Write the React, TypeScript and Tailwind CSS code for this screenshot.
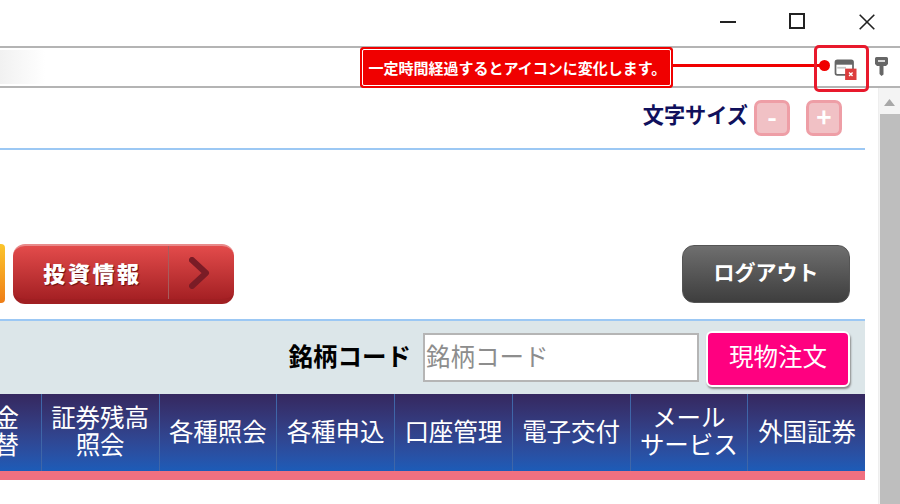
const jp = "font-['Noto_Sans_CJK_JP','Liberation_Sans',sans-serif]";

const navItems = [
  ["入出金", "お振替"],
  ["証券残高", "照会"],
  ["各種照会"],
  ["各種申込"],
  ["口座管理"],
  ["電子交付"],
  ["メール", "サービス"],
  ["外国証券"],
];

function WindowControls() {
  return (
    <div className="flex h-[46px] items-start justify-end bg-white">
      <svg width="16" height="2" className="mt-[21px] mr-[53px]">
        <rect width="16" height="2" fill="#222" />
      </svg>
      <div className="mt-[13px] mr-[54px] h-[16px] w-[16px] border-2 border-[#222]" />
      <svg width="16" height="16" viewBox="0 0 16 16" className="mt-[14px] mr-[25px]">
        <path d="M.7.7 15.3 15.3M15.3.7.7 15.3" stroke="#222" strokeWidth="1.6" fill="none" />
      </svg>
    </div>
  );
}

function TabIcon() {
  return (
    <svg width="24" height="21" viewBox="0 0 26 24">
      <path d="M1 3.5a2 2 0 0 1 2-2h16a2 2 0 0 1 2 2V16a2 2 0 0 1-2 2H3a2 2 0 0 1-2-2Z" fill="none" stroke="#666" strokeWidth="2" />
      <rect x="1" y="1.5" width="20" height="5" fill="#666" />
      <rect x="3" y="9" width="10" height="2" fill="#c8c8c8" />
      <rect x="12" y="11" width="13" height="13" fill="#dc3c3c" />
      <path d="M16.500 15.500l4 4M20.500 15.500l-4 4" stroke="#fff" strokeWidth="1.6" />
    </svg>
  );
}

function KeyIcon() {
  return (
    <svg width="13" height="19" viewBox="0 0 13 19">
      <path d="M1.5 0h10A1.5 1.5 0 0 1 13 1.5V7l-2 2H8.5v8.5L6.5 19 4.500 17V9H2L0 7V1.500A1.500 1.500 0 0 1 1.500 0Z" fill="#666" />
      <rect x="3" y="3" width="7" height="2" fill="#d8d8d8" />
    </svg>
  );
}

function AddressBar() {
  return (
    <div className="relative h-[42px] border-y-2 border-[#b4b4b4] bg-white">
      <div className="mt-[2px] h-[34px] w-[45px] bg-gradient-to-r from-[#f1f1f1] to-white" />
      <div className="absolute left-[360px] top-[-1px] flex h-[41px] w-[313px] items-center rounded-[3px] border border-[#f00000] bg-[#f00000] p-px">
        <div className={`flex h-full w-full items-center justify-center rounded-[2px] border border-white pl-[2px] text-[15px] font-bold leading-none whitespace-nowrap text-white ${jp}`}>
          一定時間経過するとアイコンに変化します。
        </div>
      </div>
      <div className="absolute left-[672px] top-[16px] h-[3px] w-[150px] bg-[#f00000]" />
      <div className="absolute left-[819px] top-[12px] h-[11px] w-[11px] rounded-full bg-[#f00000]" />
      <div className="absolute left-[814px] top-[-3px] flex h-[47px] w-[55px] items-center justify-end rounded-[5px] border-[3px] border-[#e8192c] pr-[8px] pt-[2px]">
        <TabIcon />
      </div>
      <div className="absolute left-[875px] top-[9px]">
        <KeyIcon />
      </div>
    </div>
  );
}

function FontSizeRow() {
  const btn = "flex h-[36px] w-[36px] items-center justify-center rounded-[7px] border-[3px] border-[#ee9ea6] bg-[#f1c1c5] pb-[4px] text-[26px] font-bold leading-none text-white";
  return (
    <div className={`flex h-[62px] items-start justify-end border-b-2 border-[#9cc8f4] pr-[23px] pt-[12px] ${jp}`}>
      <span className="mr-[6px] mt-[-1px] text-[21.200px] font-bold leading-[30px] whitespace-nowrap text-[#10105c]">文字サイズ</span>
      <div className={btn}>-</div>
      <div className={`${btn} ml-[16px]`}>+</div>
    </div>
  );
}

function ButtonRow() {
  return (
    <div className={`flex h-[171px] items-start border-b-2 border-[#9cc8f4] pl-0 pr-[15px] pt-[94px] ${jp}`}>
      <div className="h-[59px] w-[5px] rounded-r-[4px] bg-gradient-to-b from-[#fbc52c] to-[#ee7d16]" />
      <div className="ml-[8px] flex h-[60px] w-[221px] overflow-hidden rounded-[12px] border-b-[5px] border-t-2 border-b-[#a01f22] border-t-[#e88a8a] bg-gradient-to-b from-[#e34b4b] to-[#a52024]">
        <div className="flex w-[156px] items-center justify-center border-r border-[#a85c5c] pl-[4px]">
          <span className="text-[22px] font-black tracking-[2.600px] whitespace-nowrap text-white [text-shadow:1px_1px_1px_#6a1010]">投資情報</span>
        </div>
        <div className="flex flex-1 items-center justify-center pr-[4px]">
          <svg width="22" height="32" viewBox="0 0 22 32">
            <path d="M3 3 17 16 3 29" fill="none" stroke="#7a1c26" strokeWidth="6" strokeLinejoin="round" strokeLinecap="round" />
          </svg>
        </div>
      </div>
      <div className="ml-auto mt-px flex h-[58px] w-[168px] items-center justify-center rounded-[12px] border border-[#555] bg-gradient-to-b from-[#6f6f6f] to-[#3e3e3e] pb-[5px] text-[21px] font-bold whitespace-nowrap text-white">
        ログアウト
      </div>
    </div>
  );
}

function SearchRow() {
  return (
    <div className={`flex h-[73px] items-start justify-end bg-[#dce6e9] pr-[15px] pt-[10px] ${jp}`}>
      <span className="mt-[7px] mr-[12px] text-[24.500px] font-bold leading-[36px] whitespace-nowrap text-black">銘柄コード</span>
      <input
        readOnly
        placeholder="銘柄コード"
        className="mt-[2px] h-[49px] w-[276px] border-2 border-[#b5b5b5] bg-white px-[1px] pb-[5px] text-[24.500px] leading-none outline-none placeholder:text-[#8d8d8d]"
      />
      <div className="ml-[7px] flex h-[56px] w-[144px] items-center justify-center rounded-[6px] border-2 border-white bg-[#ff0080] pb-[5px] text-[24.500px] whitespace-nowrap text-white shadow-[1px_2px_2px_#8a8a8a]">
        現物注文
      </div>
    </div>
  );
}

function NavBar() {
  return (
    <div className={`ml-[-76px] flex h-[77px] bg-gradient-to-b from-[#35285f] to-[#1c5cb8] ${jp}`}>
      {navItems.map((lines) => (
        <div
          key={lines[0]}
          className="flex w-[117.750px] shrink-0 flex-col items-center justify-center border-r border-[#3f66a8] pb-[5px] text-[24.500px] leading-[27px] whitespace-nowrap text-white last:border-r-0"
        >
          {lines.map((line) => (
            <span key={line}>{line}</span>
          ))}
        </div>
      ))}
    </div>
  );
}

function Scrollbar() {
  return (
    <div className="flex w-[22px] shrink-0 flex-col border-l border-[#eee] bg-[#f4f4f4]">
      <div className="flex h-[26px] items-center justify-center">
        <svg width="11" height="7" viewBox="0 0 11 7" className="mt-[2px]">
          <path d="M5.500 0 11 7H0Z" fill="#a8a8a8" />
        </svg>
      </div>
      <div className="ml-px flex-1 bg-[#bebebe]" />
    </div>
  );
}

export default function App() {
  return (
    <div className="flex h-[504px] w-[900px] flex-col overflow-hidden bg-white">
      <WindowControls />
      <AddressBar />
      <div className="flex min-h-0 flex-1">
        <div className="w-[865px] shrink-0 overflow-hidden">
          <FontSizeRow />
          <ButtonRow />
          <SearchRow />
          <NavBar />
          <div className="h-[9px] bg-[#f07080]" />
        </div>
        <div className="w-[13px] shrink-0" />
        <Scrollbar />
      </div>
    </div>
  );
}
